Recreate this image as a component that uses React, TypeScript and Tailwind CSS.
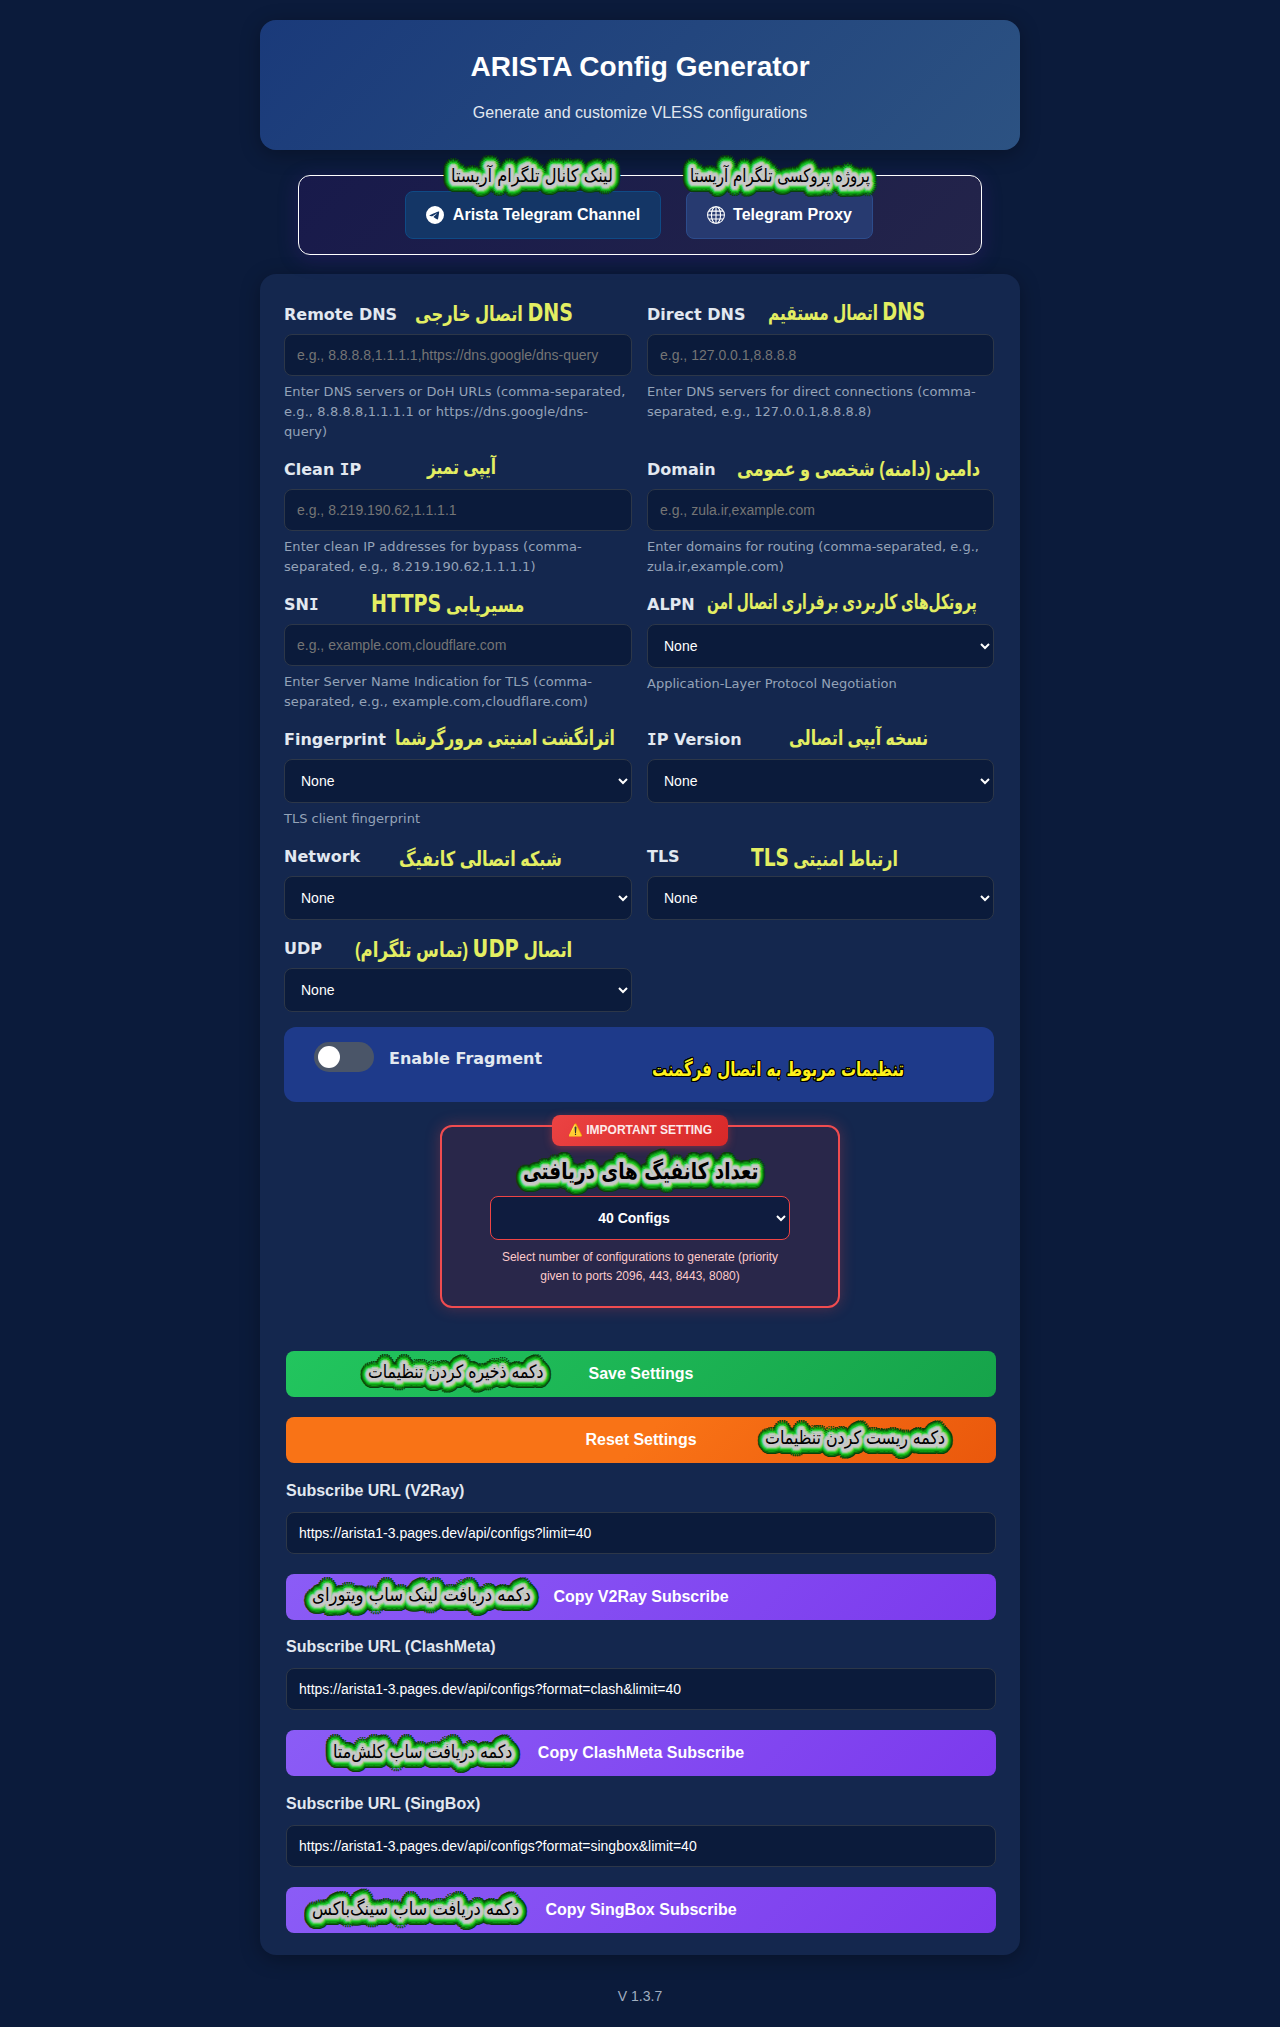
import { useLayoutEffect, useRef, useState } from "react";
import type { ReactNode } from "react";
import { BsGlobe, BsTelegram } from "react-icons/bs";

function ring(radius: number, color: string) {
  const steps = 24;
  return Array.from({ length: steps }, (_, i) => {
    const a = (i / steps) * Math.PI * 2;
    return `${(Math.cos(a) * radius).toFixed(2)}px ${(Math.sin(a) * radius).toFixed(2)}px 0 ${color}`;
  }).join(",");
}

const glow = [
  ring(1.5, "#c8c8c8"),
  ring(3, "#c8c8c8"),
  ring(4.2, "#a0cfa0"),
  ring(5.2, "#58d05c"),
  ring(6.4, "#1ac222"),
  ring(7.6, "#0e9a14"),
  ring(8.8, "#0a6a0c"),
  ring(10, "#0a3f0c"),
].join(",");

const outline = ring(1, "#000000");

/* Persian caption laid over the interface, squeezed or stretched to its box width. */
function Note({ text, at, look, width, shadow }: { text: string; at: string; look: string; width: number; shadow?: string }) {
  const ref = useRef<HTMLSpanElement>(null);
  const [scale, setScale] = useState(1);
  useLayoutEffect(() => {
    if (ref.current) setScale(width / ref.current.offsetWidth);
  }, [width]);
  const runs = text.split(/([A-Z]+)/).filter(Boolean);
  return (
    <div dir="ltr" className={`pointer-events-none absolute z-10 h-6 ${at}`}>
      <span
        ref={ref}
        dir="rtl"
        className={`inline-block origin-left leading-6 whitespace-nowrap ${look}`}
        style={{ transform: `scaleX(${scale})`, textShadow: shadow }}
      >
        {runs.map((run, i) =>
          /^[A-Z]/.test(run) ? (
            <span key={i} className="font-['DejaVu_Sans',sans-serif] text-[24px] leading-none">
              {run}
            </span>
          ) : (
            run
          ),
        )}
      </span>
    </div>
  );
}

/* Sans-serif text whose capital I carries slab serifs. */
function Serifed({ text }: { text: string }) {
  return (
    <span>
      {text.split(/(I)/).map((part, i) =>
        part === "I" ? (
          <span key={i} className="font-['DejaVu_Sans_Mono',monospace]">
            I
          </span>
        ) : (
          part
        ),
      )}
    </span>
  );
}

const yellow = "font-['Liberation_Sans','DejaVu_Sans',sans-serif] text-[20.5px] font-bold text-[#e3ee62]";
const glowing = "font-['DejaVu_Sans',sans-serif] text-[18.5px] text-black";

type FieldProps = {
  label: string;
  placeholder?: string;
  help?: string;
  note: string;
  at: string;
  width: number;
  tracking?: string;
};

function Field({ label, placeholder, help, note, at, width, tracking = "" }: FieldProps) {
  return (
    <div className="relative font-['DejaVu_Sans',sans-serif]">
      <label className="flex h-9 items-center pb-[3px] text-base font-bold text-[#e2e8f0]">
        <Serifed text={label} />
      </label>
      {placeholder ? (
        <input
          placeholder={placeholder}
          className="block h-[42px] w-full rounded-lg border border-[#2d3748] bg-[#0b1b3b] px-3 font-['Liberation_Sans',sans-serif] text-sm text-white placeholder:text-[#757575]"
        />
      ) : (
        <select className="block h-[44px] w-full rounded-lg border border-[#2d3748] bg-[#0b1b3b] px-3 font-['Liberation_Sans',sans-serif] text-sm text-white">
          <option>None</option>
        </select>
      )}
      {help && (
        <p className={`mt-1.5 text-[13px] leading-5 text-[#94a3b8] ${tracking}`}>
          {help}
        </p>
      )}
      <Note text={note} at={at} look={yellow} width={width} />
    </div>
  );
}

const fields: FieldProps[] = [
  { label: "Remote DNS", placeholder: "e.g., 8.8.8.8,1.1.1.1,https://dns.google/dns-query", help: "Enter DNS servers or DoH URLs (comma-separated, e.g., 8.8.8.8,1.1.1.1 or https://dns.google/dns-query)", note: "DNS اتصال خارجی", at: "left-[131px] top-[3px]", width: 158, tracking: "pr-1.5 tracking-[0.09px]" },
  { label: "Direct DNS", placeholder: "e.g., 127.0.0.1,8.8.8.8", help: "Enter DNS servers for direct connections (comma-separated, e.g., 127.0.0.1,8.8.8.8)", note: "DNS اتصال مستقیم", at: "left-[121px] top-[2px]", width: 157, tracking: "tracking-[0.03px]" },
  { label: "Clean IP", placeholder: "e.g., 8.219.190.62,1.1.1.1", help: "Enter clean IP addresses for bypass (comma-separated, e.g., 8.219.190.62,1.1.1.1)", note: "آیپی تمیز", at: "left-[143px] top-[2px]", width: 69, tracking: "tracking-[0.09px]" },
  { label: "Domain", placeholder: "e.g., zula.ir,example.com", help: "Enter domains for routing (comma-separated, e.g., zula.ir,example.com)", note: "دامین (دامنه) شخصی و عمومی", at: "left-[90px] top-[4px]", width: 243 },
  { label: "SNI", placeholder: "e.g., example.com,cloudflare.com", help: "Enter Server Name Indication for TLS (comma-separated, e.g., example.com,cloudflare.com)", note: "مسیریابی HTTPS", at: "left-[87px] top-[4px]", width: 153, tracking: "tracking-[0.09px]" },
  { label: "ALPN", help: "Application-Layer Protocol Negotiation", note: "پروتکل‌های کاربردی برقراری اتصال امن", at: "left-[60px] top-[2px]", width: 270 },
  { label: "Fingerprint", help: "TLS client fingerprint", note: "اثرانگشت امنیتی مرورگرشما", at: "left-[111px] top-[3px]", width: 220 },
  { label: "IP Version", note: "نسخه آیپی اتصالی", at: "left-[142px] top-[3px]", width: 139 },
  { label: "Network", note: "شبکه اتصالی کانفیگ", at: "left-[115px] top-[7px]", width: 163 },
  { label: "TLS", note: "ارتباط امنیتی TLS", at: "left-[104px] top-[6px]", width: 147 },
  { label: "UDP", note: "اتصال UDP (تماس تلگرام)", at: "left-[71px] top-[5px]", width: 217 },
];

function Bar({ color, children, note, at, width }: { color: string; children: ReactNode; note: string; at: string; width: number }) {
  return (
    <div className="relative">
      <button className={`block h-[46px] w-full rounded-lg text-base font-bold text-white ${color}`}>{children}</button>
      <Note text={note} at={at} look={glowing} width={width} shadow={glow} />
    </div>
  );
}

const subscriptions = [
  { name: "V2Ray", query: "limit=40", note: "دکمه دریافت لینک ساب ویتورای", at: "left-[26px] top-[9px]", width: 219 },
  { name: "ClashMeta", query: "format=clash&limit=40", note: "دکمه دریافت ساب کلش‌متا", at: "left-[47px] top-[10px]", width: 179 },
  { name: "SingBox", query: "format=singbox&limit=40", note: "دکمه دریافت ساب سینگ‌باکس", at: "left-[26px] top-[10px]", width: 207 },
];

export default function App() {
  return (
    <div className="h-[2027px] overflow-hidden bg-[#0b1b3b] pt-5 font-['Liberation_Sans',sans-serif] text-white">
      <div className="mx-auto w-[760px]">
        <header className="h-[130px] rounded-2xl bg-[linear-gradient(135deg,#1a3a7a,#2c5282)] text-center shadow-[0_4px_20px_rgba(0,0,0,0.3)]">
          <h1 className="pt-6 text-[28px] leading-[45px] font-bold">ARISTA Config Generator</h1>
          <p className="mt-[11px] text-base leading-[26px] text-[#e2e8f0]">Generate and customize VLESS configurations</p>
        </header>

        <section className="relative mx-auto mt-[25px] flex h-20 w-[684px] justify-center gap-[25px] rounded-xl border border-white bg-[linear-gradient(135deg,#181a4b,#23244a)] pt-[15px] pr-[2px] shadow-[0_4px_20px_rgba(76,29,149,0.3)]">
          <button className="flex h-12 w-[256px] items-center justify-center gap-[9px] rounded-lg border border-[#0f4a85] bg-[#143666] text-base font-bold">
            <BsTelegram className="size-[18px]" />
            Arista Telegram Channel
          </button>
          <button className="flex h-12 w-[187px] items-center justify-center gap-2 rounded-lg border border-[#2c4c8c] bg-[#273a70] text-base font-bold">
            <BsGlobe className="size-[18px]" />
            Telegram Proxy
          </button>
          <Note text="لینک کانال تلگرام آریستا" at="left-[152px] -top-[12px]" look={glowing} width={162} shadow={glow} />
          <Note text="پروژه پروکسی تلگرام آریستا" at="left-[391px] -top-[12px]" look={glowing} width={180} shadow={glow} />
        </section>

        <main className="mt-[19px] h-[1681px] rounded-2xl bg-[#14274e] px-6 pt-6 shadow-[0_4px_20px_rgba(0,0,0,0.3)]">
          <div className="grid w-[710px] grid-cols-[348px_347px] grid-rows-[155px_135px_135px_117px_92px_95px] gap-x-[15px]">
            {fields.map((f) => (
              <Field key={f.label} {...f} />
            ))}
          </div>

          <div className="relative flex h-[75px] w-[710px] rounded-xl bg-[#1e3a8a] px-[30px] pt-[15px]">
            <div className="h-[30px] w-[60px] rounded-full bg-[#4a5568] p-1">
              <div className="size-[22px] rounded-full bg-white" />
            </div>
            <span className="ml-[15px] pt-[5px] font-['DejaVu_Sans',sans-serif] text-base font-bold text-[#e2e8f0]">Enable Fragment</span>
            <Note
              text="تنظیمات مربوط به اتصال فرگمنت"
              at="left-[368px] top-[30px]"
              look="font-['DejaVu_Sans',sans-serif] text-[20px] font-bold text-[#fff21a]"
              width={252}
              shadow={outline}
            />
          </div>

          <div className="relative mx-auto mt-[23px] h-[183px] w-[400px] rounded-xl border-2 border-[#f04c50] bg-[#29274a] px-12 pt-[69px] text-center shadow-[0_0_15px_rgba(239,68,68,0.3)]">
            <div className="absolute -top-[12px] left-[110px] flex h-[31px] w-[176px] items-center justify-center rounded-lg bg-[linear-gradient(135deg,#eb4343,#d82828)] pb-px text-xs font-bold text-[#fdeaea] shadow-[0_2px_8px_rgba(239,68,68,0.4)]">
              ⚠️ IMPORTANT SETTING
            </div>
            <Note
              text="تعداد کانفیگ های دریافتی"
              at="left-[81px] top-[32px]"
              look="font-['DejaVu_Sans',sans-serif] text-[23px] font-bold text-black"
              width={235}
              shadow={glow}
            />
            <select className="block h-11 w-[300px] rounded-lg border border-[#ef4444] bg-[#0f1c3f] px-3 text-center text-sm font-bold text-white">
              <option>40 Configs</option>
            </select>
            <p className="mt-[8px] text-xs leading-[19.2px] text-[#fecaca]">
              Select number of configurations to generate (priority
              <br />
              given to ports 2096, 443, 8443, 8080)
            </p>
          </div>

          <div className="mt-[43px] ml-[2px] w-[710px]">
            <div className="flex flex-col gap-5">
              <Bar color="bg-[linear-gradient(135deg,#22c55e,#16a34a)]" note="دکمه ذخیره کردن تنظیمات" at="left-[82px] top-[9px]" width={176}>
                Save Settings
              </Bar>
              <Bar color="bg-[linear-gradient(135deg,#f97316_50%,#ea580c)]" note="دکمه ریست کردن تنظیمات" at="left-[479px] top-[9px]" width={180}>
                Reset Settings
              </Bar>
            </div>
            {subscriptions.map((s) => (
              <div key={s.name} className="h-[156.4px] pt-[15px]">
                <label className="block h-[34px] text-base leading-[26px] font-bold text-[#e2e8f0]">Subscribe URL ({s.name})</label>
                <input
                  readOnly
                  value={`https://arista1-3.pages.dev/api/configs?${s.query}`}
                  className="mb-5 block h-[42px] w-full rounded-lg border border-[#2d3748] bg-[#0b1b3b] px-3 text-sm text-white"
                />
                <Bar color="bg-[linear-gradient(135deg,#8b5cf6,#7c3aed)]" note={s.note} at={s.at} width={s.width}>
                  Copy {s.name} Subscribe
                </Bar>
              </div>
            ))}
          </div>
        </main>

        <footer className="mt-[30px] text-center text-sm leading-[22px] text-[#a0aec0]">V 1.3.7</footer>
      </div>
    </div>
  );
}
